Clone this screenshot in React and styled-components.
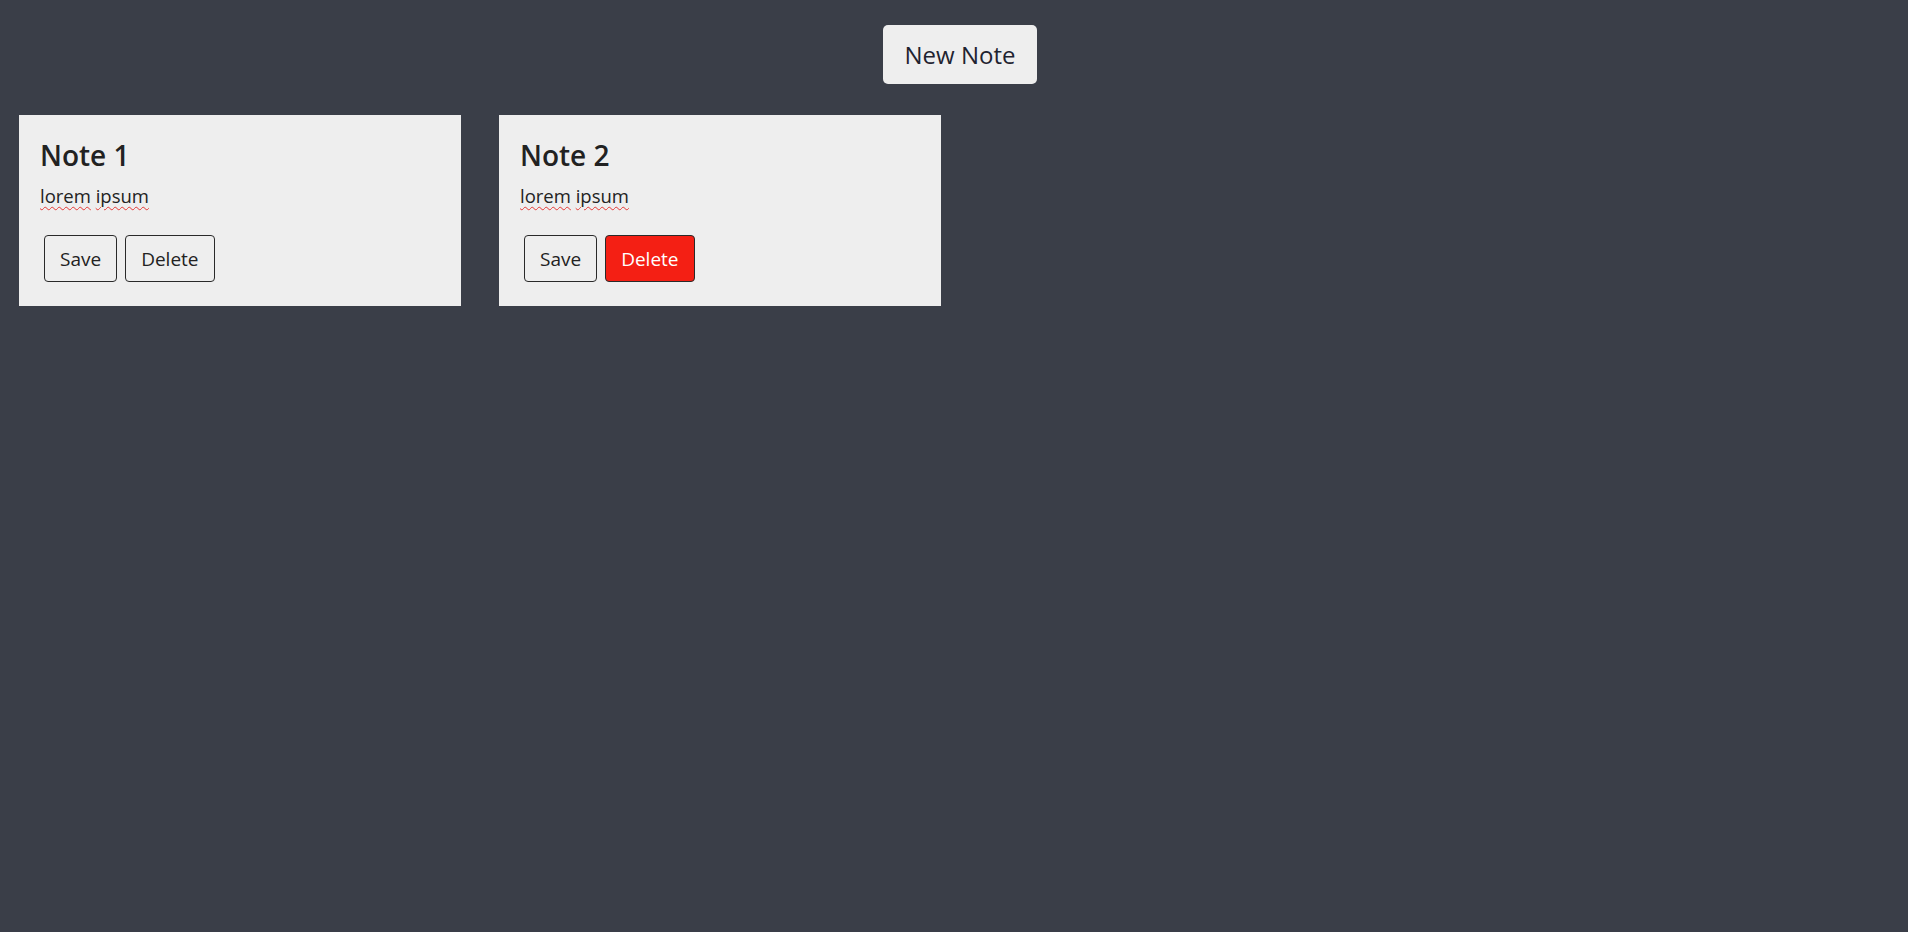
import React from 'react'
import styled, { createGlobalStyle } from 'styled-components'

const GlobalStyle = createGlobalStyle`
    body {
        margin: 0;
        background: #3a3e48;
        font-family: "Open Sans", "Noto Sans", sans-serif;
        color: #222;
    }
`;

const Header = styled.header`
    display: flex;
    justify-content: center;
    padding: 25px 0 0 12px;
`;

const NewButton = styled.button`
    width: 154px;
    height: 59px;
    background: #eeeeee;
    border: none;
    border-radius: 5px;
    font-family: inherit;
    font-size: 24px;
    color: #1f2330;
    cursor: pointer;
`;

const NotesList = styled.div`
    display: flex;
    gap: 38px;
    padding: 31px 19px 0;
`;

const Card = styled.div`
    width: 442px;
    box-sizing: border-box;
    background: #eeeeee;
    padding: 22px 21px 24px;
`;

const Title = styled.h2`
    margin: 0;
    font-size: 28px;
    font-weight: 600;
    line-height: 36px;
    color: #222;
`;

const Body = styled.p`
    margin: 10px 0 0;
    font-size: 18.5px;
    line-height: 26px;
    color: #222;

    span {
        text-decoration: underline wavy #e53935;
        text-decoration-thickness: 1px;
        text-underline-offset: 3px;
    }
`;

const Actions = styled.div`
    display: flex;
    gap: 8px;
    margin: 26px 0 0 4px;
`;

const Button = styled.button`
    height: 47px;
    padding: 0 ${p => p.$pad}px;
    border: 1px solid #2a2a2a;
    border-radius: 4px;
    background: ${p => (p.$danger ? '#f41f14' : '#eeeeee')};
    color: ${p => (p.$danger ? '#ffffff' : '#222')};
    font-family: inherit;
    font-size: 19px;
    cursor: pointer;
`;

const notes = [
    { id: 1, title: 'Note 1', hot: false },
    { id: 2, title: 'Note 2', hot: true },
];

export default function App() {
    return (
        <>
            <GlobalStyle />
            <Header>
                <NewButton>New Note</NewButton>
            </Header>
            <NotesList>
                {notes.map(note => (
                    <Card key={note.id}>
                        <Title>{note.title}</Title>
                        <Body><span>lorem</span> <span>ipsum</span></Body>
                        <Actions>
                            <Button $pad={15}>Save</Button>
                            <Button $pad={15} $danger={note.hot}>Delete</Button>
                        </Actions>
                    </Card>
                ))}
            </NotesList>
        </>
    )
}
